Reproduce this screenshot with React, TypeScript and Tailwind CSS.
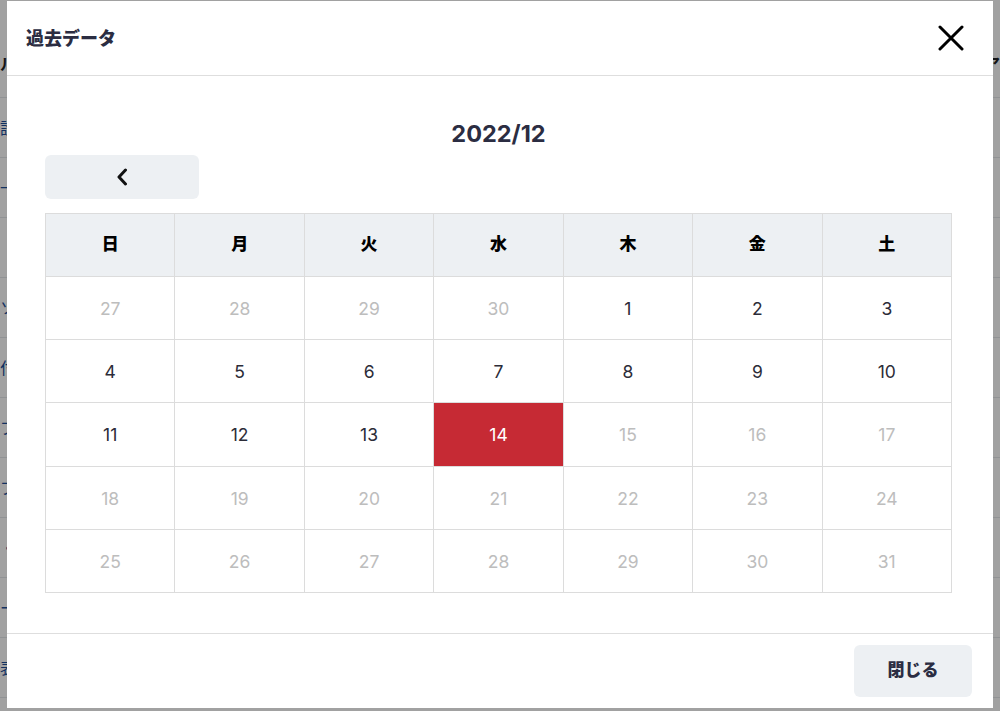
const weekdays = ["日", "月", "火", "水", "木", "金", "土"];

type Day = { n: number; muted?: boolean; active?: boolean };

const weeks: Day[][] = [
  [{ n: 27, muted: true }, { n: 28, muted: true }, { n: 29, muted: true }, { n: 30, muted: true }, { n: 1 }, { n: 2 }, { n: 3 }],
  [{ n: 4 }, { n: 5 }, { n: 6 }, { n: 7 }, { n: 8 }, { n: 9 }, { n: 10 }],
  [{ n: 11 }, { n: 12 }, { n: 13 }, { n: 14, active: true }, { n: 15, muted: true }, { n: 16, muted: true }, { n: 17, muted: true }],
  [18, 19, 20, 21, 22, 23, 24].map((n) => ({ n, muted: true })),
  [25, 26, 27, 28, 29, 30, 31].map((n) => ({ n, muted: true })),
];

const bgRows = ["設定", "一", "", "ソ", "付", "ブ", "ブ", "・", "ー", "表"];

function Background() {
  return (
    <div className="absolute inset-0 bg-white">
      <div className="flex h-[98px] items-center justify-between border-b border-gray-200 pt-[30px]">
        <span className="text-[16px] font-bold text-[#222]">ル</span>
        <span className="text-[16px] font-bold text-[#222]">ア</span>
      </div>
      {bgRows.map((t, i) => (
        <div key={i} className="flex h-[60px] items-center border-b border-gray-200">
          <span className="text-[16px] text-[#1d4f9a]">{t}</span>
        </div>
      ))}
    </div>
  );
}

export default function App() {
  return (
    <div
      className="relative h-[711px] w-[1000px] overflow-hidden"
      style={{ fontFamily: '"Inter", "Noto Sans CJK JP", sans-serif' }}
    >
      <Background />
      <div className="absolute inset-0 bg-black/[0.37]" />

      <div className="absolute left-[7px] right-[7px] top-[1px] bottom-[3px] flex flex-col bg-white">
        <div className="flex h-[75px] shrink-0 items-center justify-between border-b border-[#dedede] pl-[19px] pr-[29px]">
          <h2 className="text-[18px] font-extrabold text-[#2b2d42]">過去データ</h2>
          <button className="text-black">
            <svg width="26" height="26" viewBox="0 0 26 26" fill="none" stroke="currentColor" strokeWidth="3" strokeLinecap="round">
              <path d="M2 2 24 24M24 2 2 24" />
            </svg>
          </button>
        </div>

        <div className="flex-1 pl-[38px] pr-[41px]">
          <div className="pt-[43px] text-center text-[23.5px] font-bold leading-[30px] text-[#2b2d42]">2022/12</div>
          <button className="mt-[6px] flex h-[44px] w-[154px] items-center justify-center rounded-[6px] bg-[#edf0f3]">
            <svg width="12" height="18" viewBox="0 0 12 18" fill="none" stroke="#111" strokeWidth="3" strokeLinecap="round" strokeLinejoin="round">
              <path d="M9.5 2 3 9l6.5 7" />
            </svg>
          </button>

          <div className="mt-[14px] grid grid-cols-7 border-l border-t border-[#dcdcdc]">
            {weekdays.map((w) => (
              <div
                key={w}
                className="flex h-[63px] items-center justify-center border-b border-r border-[#dcdcdc] bg-[#edf0f3] text-[17px] font-extrabold text-black"
              >
                {w}
              </div>
            ))}
            {weeks.flat().map((d, i) => (
              <div
                key={i}
                className={`flex h-[63.2px] items-center justify-center border-b border-r border-[#dcdcdc] pt-[2px] text-[17.5px] ${
                  d.active
                    ? "bg-[#c62a34] text-white"
                    : d.muted
                    ? "text-[#bdbdbd]"
                    : "text-[#2c2c38]"
                }`}
              >
                {d.n}
              </div>
            ))}
          </div>
        </div>

        <div className="flex h-[75px] shrink-0 items-start justify-end border-t border-[#dedede] pr-[21px] pt-[11px]">
          <button className="flex h-[52px] w-[118px] items-center justify-center rounded-[6px] bg-[#edf0f3] text-[17px] font-extrabold text-[#2b2d42]">
            閉じる
          </button>
        </div>
      </div>
    </div>
  );
}
